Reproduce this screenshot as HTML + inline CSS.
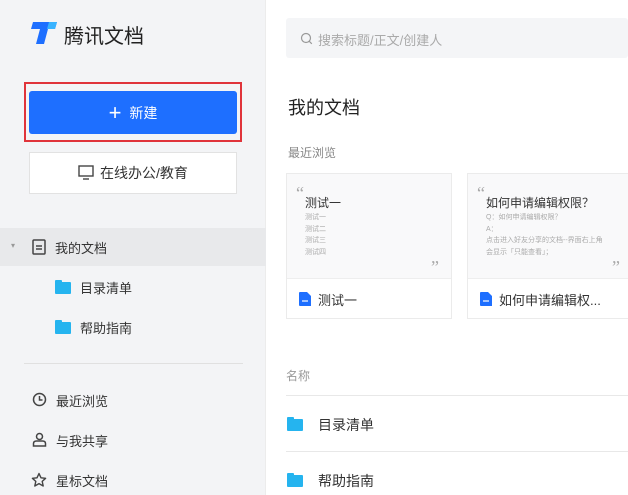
<!DOCTYPE html>
<html><head><meta charset="utf-8"><style>
*{margin:0;padding:0;box-sizing:border-box}
body{width:628px;height:495px;overflow:hidden;background:#fff;font-family:"Liberation Sans","Noto Sans CJK SC",sans-serif;position:relative;color:#333}
.a{position:absolute;white-space:nowrap}
#side{position:absolute;left:0;top:0;width:266px;height:495px;background:#f3f4f6;border-right:1px solid #ececec}
.fold{position:absolute;width:16px;height:12px;background:#25b4ef;border-radius:1px}
.fold:before{content:"";position:absolute;left:0;top:-2px;width:7px;height:3px;background:#25b4ef;border-radius:1px 1px 0 0}
.card{position:absolute;top:173px;width:166px;height:146px;border:1px solid #ebebeb;background:#fff}
.card .top{position:absolute;left:0;top:0;right:0;height:105px;background:#f9f9fa;border-bottom:1px solid #eee}
.q{position:absolute;font-size:18px;color:#aaa;font-family:"Liberation Serif",serif;line-height:1}
</style></head><body>
<div id="side">
<svg class="a" style="left:29px;top:20px" width="30" height="26" viewBox="0 0 30 26"><path d="M4 2h24l-2 7h-7l-4 15H7l4-15H2z" fill="#1e6fff"/><path d="M20 2h8l-2 7h-8z" fill="#39b3ff"/></svg>
<div class="a" style="left:64px;top:20px;font-size:20px;color:#222">腾讯文档</div>
<div class="a" style="left:24px;top:82px;width:218px;height:60px;border:2px solid #e0343a"></div>
<div class="a" style="left:29px;top:91px;width:208px;height:43px;background:#1e6fff;border-radius:3px;color:#fff;font-size:14px;text-align:center;line-height:43px"><span style="font-size:22px;vertical-align:-2px;margin-right:8px;font-weight:300">+</span>新建</div>
<div class="a" style="left:29px;top:152px;width:208px;height:42px;background:#fff;border:1px solid #e2e2e2;font-size:14px;text-align:center;line-height:40px;color:#333"><svg width="16" height="15" viewBox="0 0 16 15" style="vertical-align:-2px;margin-right:6px"><rect x="1" y="1" width="14" height="10" fill="none" stroke="#444" stroke-width="1.4"/><path d="M5 14h6" stroke="#444" stroke-width="1.4"/></svg>在线办公/教育</div>
<div class="a" style="left:0;top:228px;width:266px;height:38px;background:#e8e9eb"></div>
<div class="a" style="left:11px;top:241px;font-size:8px;color:#999">▾</div>
<svg class="a" style="left:32px;top:239px" width="14" height="16" viewBox="0 0 14 16"><rect x="1" y="1" width="12" height="14" rx="1" fill="none" stroke="#444" stroke-width="1.5"/><path d="M4 7h6M4 10h6" stroke="#444" stroke-width="1.4"/></svg>
<div class="a" style="left:55px;top:238px;font-size:13px">我的文档</div>
<div class="fold" style="left:55px;top:282px"></div>
<div class="a" style="left:80px;top:278px;font-size:13px">目录清单</div>
<div class="fold" style="left:55px;top:322px"></div>
<div class="a" style="left:80px;top:318px;font-size:13px">帮助指南</div>
<div class="a" style="left:24px;top:363px;width:219px;height:1px;background:#e0e0e0"></div>
<svg class="a" style="left:32px;top:392px" width="15" height="15" viewBox="0 0 15 15"><circle cx="7.5" cy="7.5" r="6" fill="none" stroke="#444" stroke-width="1.5"/><path d="M7.5 4v4h3" fill="none" stroke="#444" stroke-width="1.5"/></svg>
<div class="a" style="left:56px;top:391px;font-size:13px">最近浏览</div>
<svg class="a" style="left:32px;top:432px" width="15" height="15" viewBox="0 0 15 15"><circle cx="7.5" cy="4.5" r="3" fill="none" stroke="#444" stroke-width="1.5"/><path d="M1.5 14v-2.5q0-2.5 3-2.5h6q3 0 3 2.5V14z" fill="none" stroke="#444" stroke-width="1.5"/></svg>
<div class="a" style="left:56px;top:431px;font-size:13px">与我共享</div>
<svg class="a" style="left:31px;top:472px" width="16" height="16" viewBox="0 0 16 16"><path d="M8 1.5l2 4.3 4.6.5-3.4 3.1 1 4.6L8 11.6 3.8 14l1-4.6L1.4 6.3 6 5.8z" fill="none" stroke="#444" stroke-width="1.4" stroke-linejoin="round"/></svg>
<div class="a" style="left:56px;top:471px;font-size:13px">星标文档</div>
</div>
<div class="a" style="left:286px;top:18px;width:342px;height:40px;background:#f4f5f7;border-radius:3px"></div>
<svg class="a" style="left:300px;top:32px" width="13" height="13" viewBox="0 0 13 13"><circle cx="6" cy="6" r="4.5" fill="none" stroke="#999" stroke-width="1.2"/><path d="M9.3 9.3l2.5 2.5" stroke="#999" stroke-width="1.2"/></svg>
<div class="a" style="left:318px;top:30px;font-size:13px;color:#aaa">搜索标题/正文/创建人</div>
<div class="a" style="left:288px;top:94px;font-size:18px;color:#222">我的文档</div>
<div class="a" style="left:288px;top:144px;font-size:12px;color:#888">最近浏览</div>
<div class="card" style="left:286px"><div class="top">
<div class="q" style="left:9px;top:10px">“</div>
<div class="a" style="left:18px;top:20px;font-size:12px;color:#333">测试一</div>
<div class="a" style="left:18px;top:38px;font-size:7px;line-height:11.5px;color:#aaa">测试一<br>测试二<br>测试三<br>测试四</div>
<div class="q" style="left:144px;top:84px">”</div></div>
<svg class="a" style="left:11px;top:117px" width="14" height="16" viewBox="0 0 14 16"><path d="M1 2q0-1 1-1h7l4 4v10H2q-1 0-1-1z" fill="#1e6fff"/><path d="M4 10h6" stroke="#fff" stroke-width="1.2"/></svg>
<div class="a" style="left:31px;top:116px;font-size:13px">测试一</div></div>
<div class="card" style="left:467px;width:170px"><div class="top">
<div class="q" style="left:9px;top:10px">“</div>
<div class="a" style="left:18px;top:20px;font-size:12px;color:#333">如何申请编辑权限？</div>
<div class="a" style="left:18px;top:38px;font-size:7px;line-height:11.5px;color:#aaa">Q：如何申请编辑权限？<br>A：<br>点击进入好友分享的文档--界面右上角<br>会显示「只能查看」；</div>
<div class="q" style="left:144px;top:84px">”</div></div>
<svg class="a" style="left:11px;top:117px" width="14" height="16" viewBox="0 0 14 16"><path d="M1 2q0-1 1-1h7l4 4v10H2q-1 0-1-1z" fill="#1e6fff"/><path d="M4 10h6" stroke="#fff" stroke-width="1.2"/></svg>
<div class="a" style="left:31px;top:116px;font-size:13px">如何申请编辑权...</div></div>
<div class="a" style="left:286px;top:367px;font-size:12px;color:#999">名称</div>
<div class="a" style="left:286px;top:395px;width:342px;height:1px;background:#e8e8e8"></div>
<div class="fold" style="left:287px;top:419px"></div>
<div class="a" style="left:318px;top:415px;font-size:14px">目录清单</div>
<div class="a" style="left:286px;top:451px;width:342px;height:1px;background:#e8e8e8"></div>
<div class="fold" style="left:287px;top:475px"></div>
<div class="a" style="left:318px;top:471px;font-size:14px">帮助指南</div>
</body></html>
